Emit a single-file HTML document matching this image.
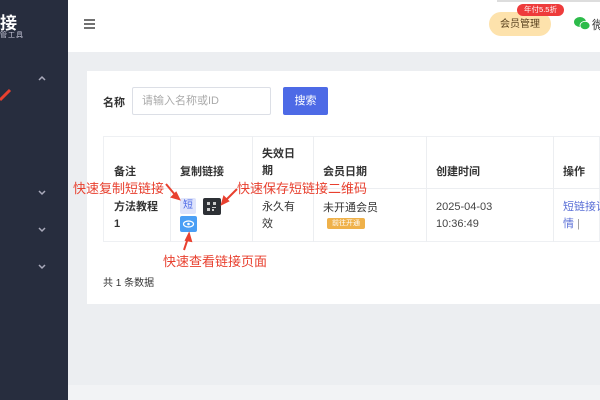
<!DOCTYPE html><html><head><meta charset="utf-8"><style>
*{margin:0;padding:0;box-sizing:border-box}
body{width:600px;height:400px;overflow:hidden;background:#eceef1;font-family:"Liberation Sans","Noto Sans CJK SC",sans-serif;position:relative;color:#333}
.a{position:absolute;white-space:nowrap}
.sb{left:0;top:0;width:68px;height:400px;background:#272d3e}
.hd{left:68px;top:0;width:532px;height:52px;background:#fff}
.card{left:87px;top:71px;width:513px;height:233px;background:#fff}
.t{font-size:11px;color:#333}
.red{color:#e8402f;font-size:13px}
.ln{background:#eceef1}
</style></head><body>
<div class="a sb"></div>
<div class="a" style="left:0;top:9px;color:#fff;font-size:17px;font-weight:bold">接</div>
<div class="a" style="left:0;top:30px;color:#ccd;font-size:7px;letter-spacing:1px">管工具</div>
<svg class="a" style="left:0;top:0" width="68" height="300">
<path d="M0 100 L10 90" stroke="#e8402f" stroke-width="3"/>
<g fill="none" stroke="#aab" stroke-width="1.5"><path d="M39 80l3-3 3 3"/><path d="M39 191l3 3 3-3"/><path d="M39 228l3 3 3-3"/><path d="M39 265l3 3 3-3"/></g></svg>
<div class="a" style="left:68px;top:385px;width:532px;height:15px;background:#f2f3f5"></div>
<div class="a hd"></div>
<svg class="a" style="left:84px;top:19px" width="12" height="10"><path d="M0 1h11M0 5h11M0 9h11" stroke="#444" stroke-width="1.6"/></svg>
<div class="a" style="left:489px;top:12px;width:62px;height:24px;border-radius:12px;background:#fde2ac;font-size:10px;line-height:24px;padding-top:1px;text-align:center;color:#5a4320">会员管理</div>
<div class="a" style="left:517px;top:4px;width:47px;height:12px;border-radius:6px;background:#ee3b3b;color:#fff;font-size:7.5px;line-height:12px;text-align:center">年付5.5折</div>
<svg class="a" style="left:574px;top:17px" width="16" height="13"><ellipse cx="6" cy="5" rx="6" ry="5" fill="#2dbb4a"/><ellipse cx="11" cy="8.5" rx="5" ry="4.2" fill="#2dbb4a" stroke="#fff" stroke-width=".8"/></svg>
<div class="a" style="left:592px;top:16px;font-size:12px">微</div>
<div class="a" style="left:497px;top:0;width:103px;height:2px;background:#ddd"></div>
<div class="a card"></div>
<div class="a t" style="left:103px;top:94px;font-weight:bold">名称</div>
<div class="a" style="left:132px;top:87px;width:139px;height:28px;border:1px solid #dcdfe6;border-radius:2px;font-size:11px;color:#aaa;line-height:26px;padding-left:9px">请输入名称或ID</div>
<div class="a" style="left:283px;top:87px;width:45px;height:28px;background:#4d6ae6;border-radius:2px;color:#fff;font-size:11px;line-height:28px;text-align:center">搜索</div>
<div class="a" style="left:103px;top:136px;width:497px;height:106px;border:1px solid #eef0f3"></div>
<div class="a ln" style="left:103px;top:188px;width:497px;height:1px"></div>
<div class="a ln" style="left:170px;top:136px;width:1px;height:106px"></div>
<div class="a ln" style="left:252px;top:136px;width:1px;height:106px"></div>
<div class="a ln" style="left:313px;top:136px;width:1px;height:106px"></div>
<div class="a ln" style="left:426px;top:136px;width:1px;height:106px"></div>
<div class="a ln" style="left:553px;top:136px;width:1px;height:106px"></div>
<div class="a t" style="left:114px;top:163px;font-weight:bold">备注</div>
<div class="a t" style="left:180px;top:163px;font-weight:bold">复制链接</div>
<div class="a t" style="left:262px;top:146px;font-weight:bold;line-height:17px">失效日<br>期</div>
<div class="a t" style="left:323px;top:163px;font-weight:bold">会员日期</div>
<div class="a t" style="left:436px;top:163px;font-weight:bold">创建时间</div>
<div class="a t" style="left:563px;top:163px;font-weight:bold">操作</div>
<div class="a t" style="left:114px;top:199px;font-weight:bold;line-height:17px">方法教程<br>1</div>
<div class="a" style="left:180px;top:198px;width:16px;height:16px;background:#dfe4fb;border-radius:2px;color:#4d6ae6;font-size:10px;line-height:16px;text-align:center">短</div>
<div class="a" style="left:203px;top:198px;width:18px;height:17px;background:#2d3035;border-radius:2px"></div>
<svg class="a" style="left:207px;top:202px" width="10" height="9"><g fill="#ccc"><rect x="0" y="0" width="3" height="3"/><rect x="6" y="0" width="3" height="3"/><rect x="0" y="6" width="3" height="3"/><rect x="5" y="5" width="4" height="1"/><rect x="5" y="7" width="2" height="2"/></g></svg>
<div class="a" style="left:180px;top:216px;width:17px;height:16px;background:#4a9ff5;border-radius:2px"></div>
<svg class="a" style="left:182px;top:219px" width="13" height="10"><ellipse cx="6.5" cy="5" rx="5" ry="3" fill="none" stroke="#fff" stroke-width="1.2"/><circle cx="6.5" cy="5" r="1.3" fill="#fff"/></svg>
<div class="a t" style="left:262px;top:199px;line-height:17px">永久有<br>效</div>
<div class="a t" style="left:323px;top:199px">未开通会员</div>
<div class="a" style="left:327px;top:218px;width:38px;height:11px;background:#efb14a;border-radius:2px;color:#fff;font-size:7px;line-height:11px;text-align:center">前往开通</div>
<div class="a t" style="left:436px;top:199px;line-height:17px;color:#444">2025-04-03<br>10:36:49</div>
<div class="a t" style="left:563px;top:199px;line-height:17px;color:#5a6fd6">短链接详<br>情 <span style="color:#999">|</span></div>
<div class="a t" style="left:103px;top:274px;font-size:10px">共 1 条数据</div>
<div class="a red" style="left:73px;top:178px">快速复制短链接</div>
<div class="a red" style="left:237px;top:178px">快速保存短链接二维码</div>
<div class="a red" style="left:163px;top:251px">快速查看链接页面</div>
<svg class="a" style="left:0;top:0" width="600" height="400"><g stroke="#e8402f" stroke-width="2" fill="#e8402f">
<path d="M166 184L176 196" /><path d="M179 199l-7-2 4-4z"/>
<path d="M237 189L226 200"/><path d="M222 204l2-7 4 4z"/>
<path d="M184 250L188 238"/><path d="M189 234l2 7-5-1z"/></g></svg>
</body></html>
